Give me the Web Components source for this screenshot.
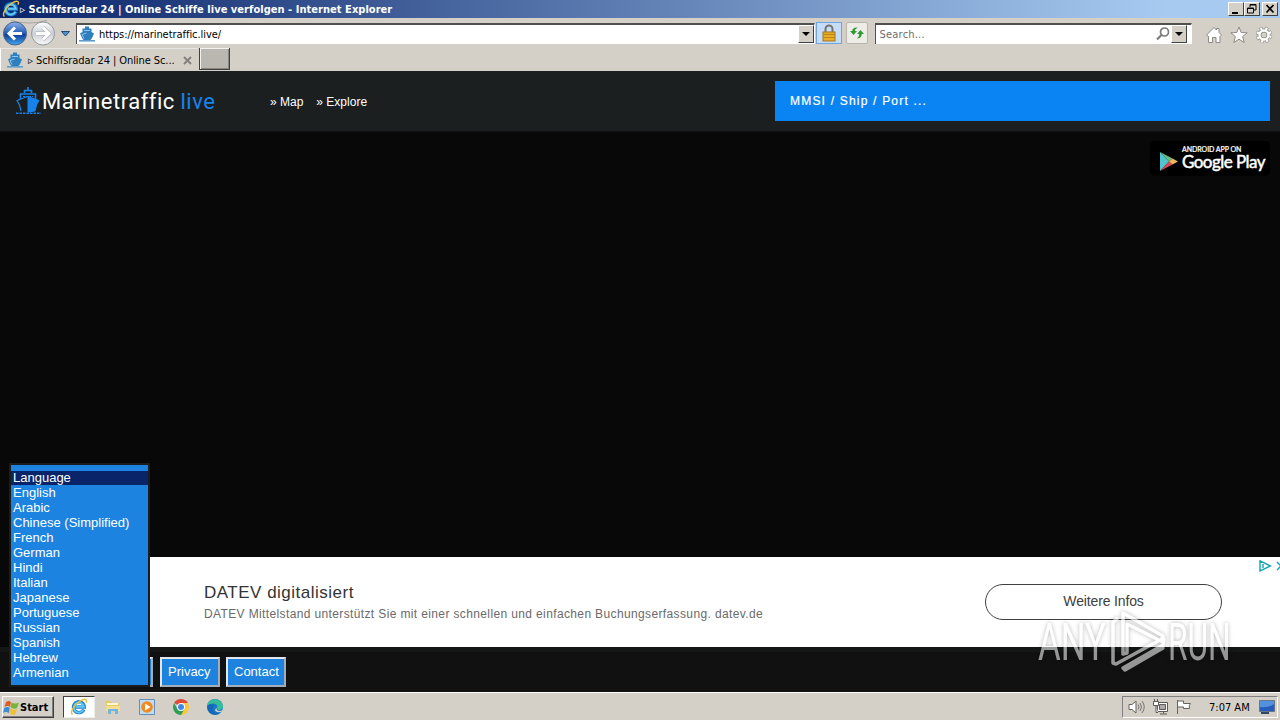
<!DOCTYPE html>
<html lang="de">
<head>
<meta charset="utf-8">
<title>Schiffsradar 24 | Online Schiffe live verfolgen</title>
<style>
    body {
        margin: 0;
        width: 1280px;
        height: 720px;
        overflow: hidden;
        background: #080808;
        --face: #d4d0c8;
        --ui: "DejaVu Sans Condensed", "DejaVu Sans", sans-serif;
        --web: "Liberation Sans", Arial, sans-serif;
        font-family: var(--web);
    }
</style>
</head>
<body>
<desktop-screen>
    <title-bar>▹ Schiffsradar 24 | Online Schiffe live verfolgen - Internet Explorer</title-bar>
    <nav-bar>https://marinetraffic.live/</nav-bar>
    <tab-strip>▹ Schiffsradar 24 | Online Sc...</tab-strip>
    <site-header></site-header>
    <map-view></map-view>
    <ad-banner>
        <span slot="title">DATEV digitalisiert</span>
        <span slot="text">DATEV Mittelstand unterstützt Sie mit einer schnellen und einfachen Buchungserfassung. datev.de</span>
        <span slot="action">Weitere Infos</span>
    </ad-banner>
    <site-footer></site-footer>
    <task-bar></task-bar>
    <language-list slot="over"></language-list>
    <run-watermark slot="over"></run-watermark>
</desktop-screen>

<script>
const base = `
    * {
        margin: 0;
        padding: 0;
        box-sizing: border-box;
    }
    :host {
        display: block;
        box-sizing: border-box;
        white-space: nowrap;
    }
    svg {
        display: block;
        flex: none;
    }
`;

function define(name, css, html) {
    customElements.define(name, class extends HTMLElement {
        constructor() {
            super();
            this.attachShadow({mode: "open"});
        }
        connectedCallback() {
            this.shadowRoot.innerHTML = `<style>${base}${css}</style>${html}`;
        }
    });
}

define("desktop-screen", `
    :host {
        position: relative;
        display: flex;
        flex-direction: column;
        width: 1280px;
        height: 720px;
        overflow: hidden;
    }
`, `<slot></slot><slot name="over"></slot>`);

define("ie-logo", `
    :host { width: 18px; height: 18px; flex: none; }
`, `
    <svg width="100%" height="100%" viewBox="0 0 18 18">
        <path d="M13.8 11.5A5.4 5.4 0 1 1 14.3 9H5.5" fill="none" stroke="#1c83cf" stroke-width="3.4"/>
        <path d="M13.3 11.9A5 5 0 1 1 13.8 8.8H6" fill="none" stroke="#68c7f3" stroke-width="1.9"/>
        <path d="M2.6 16.4C-.6 15.6 3.6 7 9.6 3.3 14.4.3 17.8.6 16 4.8" fill="none" stroke="#e9bf3b" stroke-width="1.4"/>
    </svg>
`);

define("ship-icon", `
    :host { width: 16px; height: 16px; flex: none; }
`, `
    <svg width="100%" height="100%" viewBox="0 0 16 16">
        <path d="M6 2.500V.500h4v2h2.500v3.500l2.500 1.500-2 4.500-1.500 2H4.500l-1.500-2L1 7.500 3.500 6V2.500z" fill="#2d7fbd"/>
        <path d="M5 4.500h6M7.500 7L3 8.600l2 4" fill="none" stroke="#8cc4ed"/>
        <path d="M0 14.800h16" stroke="#5f9ccb" stroke-width="1.600"/>
    </svg>
`);

define("title-bar", `
    :host {
        display: flex;
        align-items: center;
        height: 18px;
        padding: 0 2px;
        background: linear-gradient(to right, #0a246a, #a6caf0 91%);
        color: #fff;
        font: bold 11px var(--ui);
    }
    .text { flex: 1; letter-spacing: .04px; }
    .buttons { display: flex; }
    .buttons svg {
        width: 16px;
        height: 14px;
        background: var(--face);
        border: 1px solid;
        border-color: #fff #404040 #404040 #fff;
    }
    .buttons svg:last-child { margin-left: 2px; }
`, `
    <ie-logo></ie-logo>
    <span class="text"><slot></slot></span>
    <div class="buttons">
        <svg viewBox="0 0 14 12"><path d="M3 9h6v2H3z"/></svg>
        <svg viewBox="0 0 14 12"><path d="M5 4V1.500h6V7H9M5 2h6M2.500 5h6v5h-6zM2.500 5.500h6" fill="none" stroke="#000"/></svg>
        <svg viewBox="0 0 14 12"><path d="M3.500 2l7 7.500M10.500 2l-7 7.500" fill="none" stroke="#000" stroke-width="1.700"/></svg>
    </div>
`);

define("nav-bar", `
    :host {
        display: flex;
        align-items: center;
        height: 30px;
        padding: 0 7px 0 2px;
        background: var(--face);
        font: 11px var(--ui);
    }
    .field {
        display: flex;
        align-items: center;
        height: 21px;
        background: #fff;
        border: solid #505050;
        border-width: 2px 0 0 1px;
        border-right: 1px solid #fff;
    }
    .address { width: 740px; margin-left: 4px; padding-left: 2px; color: #000; }
    .address span { margin-left: 4px; flex: 1; letter-spacing: -.05px; }
    .search { width: 318px; margin-left: 7px; padding: 0 4px; color: #6d6d6d; }
    .search span { flex: 1; letter-spacing: .2px; }
    .drop {
        width: 16px;
        height: 18px;
        background: var(--face);
        border: 1px solid;
        border-color: #fff #404040 #404040 #fff;
    }
    .lock, .sync {
        display: flex;
        align-items: center;
        justify-content: center;
        height: 22px;
    }
    .lock { width: 26px; margin-left: 1px; background: #c5ddf8; border: 1px solid #70a6df; }
    .sync { width: 22px; margin-left: 4px; background: #eeece7; border: 1px solid #b8b4ac; border-radius: 2px; }
    .tools { display: flex; gap: 7px; margin: 4px 0 0 13px; }
`, `
    <svg width="70" height="30" viewBox="0 0 70 30">
        <defs>
            <linearGradient id="b" x2="0" y2="1"><stop stop-color="#8bb4eb"/><stop offset=".5" stop-color="#235bb6"/><stop offset=".55" stop-color="#103d95"/><stop offset="1" stop-color="#45a8f2"/></linearGradient>
            <linearGradient id="f" x2="0" y2="1"><stop stop-color="#fff"/><stop offset=".5" stop-color="#cbd0d6"/><stop offset="1" stop-color="#fafafa"/></linearGradient>
        </defs>
        <path d="M9 2.500q18 5 36 0" fill="none" stroke="#aaa69f"/>
        <circle cx="13" cy="15.500" r="11.500" fill="url(#b)" stroke="#4d6485"/>
        <path d="M20 15.500H8M13 9.500l-6 6 6 6" fill="none" stroke="#fff" stroke-width="3"/>
        <circle cx="41" cy="15.500" r="11.500" fill="url(#f)" stroke="#92979d"/>
        <path d="M34 15.500h12M41 9.500l6 6-6 6" fill="none" stroke="#a9acb0" stroke-width="4"/>
        <path d="M34 15.500h12M41 9.500l6 6-6 6" fill="none" stroke="#fff" stroke-width="3"/>
        <path d="M59.500 13.500h8l-4 4.500z" fill="#4a93d2" stroke="#1f4b76"/>
    </svg>
    <div class="field address">
        <ship-icon></ship-icon>
        <span><slot></slot></span>
        <svg class="drop" viewBox="0 0 14 16"><path d="M3 6h8l-4 4z"/></svg>
    </div>
    <div class="lock">
        <svg width="16" height="18" viewBox="0 0 16 18">
            <path d="M4.500 8V5a3.500 3.500 0 0 1 7 0v3" fill="none" stroke="#77736b" stroke-width="2"/>
            <rect x="2" y="8" width="12" height="9" fill="#e9ae24" stroke="#a4741c"/>
            <path d="M2 10.500h12M2 13.500h12" stroke="#ba821a"/>
        </svg>
    </div>
    <div class="sync">
        <svg width="16" height="16" viewBox="0 0 16 16" fill="#2c9b35">
            <path d="M1 6l3.500 4L8 6H5.700q0-2 3-3.500Q3.500 2 3.200 6z"/>
            <path d="M15 9l-3.500-4L8 9h2.300q0 3-2.500 4.500Q12.500 13.500 12.800 9z"/>
        </svg>
    </div>
    <div class="field search">
        <span>Search...</span>
        <svg width="16" height="16" viewBox="0 0 16 16"><circle cx="9.500" cy="6" r="4" fill="none" stroke="#7a7a7a" stroke-width="1.700"/><path d="M6.500 9L2 13.500" stroke="#7a7a7a" stroke-width="2.200"/></svg>
        <svg class="drop" viewBox="0 0 14 16"><path d="M3 6h8l-4 4z"/></svg>
    </div>
    <div class="tools">
        <svg width="18" height="18" viewBox="0 0 18 18"><path d="M1.500 9L9 1.500l2.500 2.500V2.500h2.500V6.500L16.500 9l-1.500 1.500V16.500h-4v-5H7.500v5h-4v-6z" fill="#fff" stroke="#8d8a84"/></svg>
        <svg width="18" height="18" viewBox="0 0 18 18"><path d="M9 1l2.200 5.500 6 .3-4.600 3.800 1.600 5.900L9 13.200l-5.200 3.300 1.600-5.900L.8 6.800l6-.3z" fill="#fff" stroke="#8d8a84"/></svg>
        <svg width="18" height="18" viewBox="0 0 18 18">
            <g fill="none" stroke="#8d8a84" stroke-width="4"><circle cx="9" cy="9" r="4.500"/><circle cx="9" cy="9" r="6.500" stroke-width="3.400" stroke-dasharray="3.200 1.905"/></g>
            <g fill="none" stroke="#fff" stroke-width="2.400"><circle cx="9" cy="9" r="4.500"/><circle cx="9" cy="9" r="6.500" stroke-dasharray="2.200 2.905" stroke-dashoffset="-.5"/></g>
        </svg>
    </div>
`);

define("tab-strip", `
    :host {
        display: flex;
        height: 23px;
        background: var(--face);
        font: 11px var(--ui);
    }
    .tab {
        display: flex;
        align-items: center;
        width: 198px;
        padding: 0 6px 0 6px;
        border-left: 1px solid #fff;
        border-top: 1px solid #e8e6e2;
    }
    .tab span { flex: 1; margin-left: 5px; letter-spacing: -.08px; }
    .new {
        width: 31px;
        height: 22px;
        margin-left: 1px;
        background: #bab6b0;
        border: solid #404040;
        border-width: 0 1px 1px 1px;
        box-shadow: inset 1px 1px #f3f1ee, inset -1px -1px #8b8780;
    }
`, `
    <div class="tab">
        <ship-icon></ship-icon>
        <span><slot></slot></span>
        <svg width="9" height="9" viewBox="0 0 9 9"><path d="M1 1l7 7M8 1L1 8" stroke="#85817c" stroke-width="2"/></svg>
    </div>
    <div class="new"></div>
`);

define("site-header", `
    :host {
        display: flex;
        align-items: center;
        height: 60px;
        padding: 0 10px 0 15px;
        background: #1c1f20;
        color: #fff;
    }
    .logo { display: flex; align-items: center; width: 255px; font: 22px Roboto, sans-serif; }
    .logo svg { margin: -1px 1px 0 0; }
    .logo b { font-weight: 400; color: #1683ec; }
    .logo span { letter-spacing: .52px; word-spacing: -.5px; }
    nav { display: flex; gap: 13px; flex: 1; padding-top: 2px; font-size: 12px; }
    .find {
        width: 495px;
        height: 40px;
        padding-left: 15px;
        background: #0b84f3;
        font-size: 12px;
        line-height: 40px;
        letter-spacing: 1.2px;
        -webkit-text-stroke: .2px #fff;
    }
`, `
    <div class="logo">
        <svg width="26" height="28" viewBox="0 0 26 28" fill="none" stroke="#1683ec">
            <path d="M13 0v4M9.500 6V3.500h7V6" stroke-width="1.600"/>
            <path d="M5.500 12V7h15v5" stroke-width="1.600"/>
            <path d="M8 9.500h10" stroke-dasharray="2 1"/>
            <path d="M12.500 9.500L2 13.500l2.500 4.500 1.500 6" stroke-width="1.200"/>
            <path d="M13 9.500l11 4-2.500 4.500-1.500 6-7 1z" fill="#1683ec"/>
            <path d="M1 26.200h25" stroke-width="1.600" stroke-dasharray="2.500 1"/>
        </svg>
        <span>Marinetraffic <b>live</b></span>
    </div>
    <nav><a>» Map</a><a>» Explore</a></nav>
    <div class="find">MMSI / Ship / Port ...</div>
`);

define("map-view", `
    :host {
        display: flex;
        align-items: flex-start;
        justify-content: flex-end;
        height: 426px;
        padding: 9px 10px;
        background: #080808;
        border-top: 1px solid #101112;
    }
    .play {
        display: flex;
        align-items: center;
        width: 120px;
        height: 35px;
        padding-left: 10px;
        gap: 4px;
        background: #000;
        border-radius: 5px;
        color: #fff;
    }
    .play svg { margin-top: 5px; }
    .play div { margin-top: -3px; }
    small { display: block; font: 500 7px/8px Lato, sans-serif; letter-spacing: -.05px; -webkit-text-stroke: .2px #fff; }
    strong { display: block; font: 400 17px/17px Lato, sans-serif; letter-spacing: -.55px; -webkit-text-stroke: .5px #fff; }
`, `
    <div class="play">
        <svg width="18" height="19" viewBox="0 0 18 19">
            <path d="M0 0v19L9 9.500z" fill="#4fc3cf"/>
            <path d="M0 0l12.500 6.500L9 9.500z" fill="#67bd7d"/>
            <path d="M0 19l12.500-6.500L9 9.500z" fill="#d84b55"/>
            <path d="M12.500 6.500L18 9.500l-5.500 3L9 9.500z" fill="#efb75a"/>
        </svg>
        <div><small>ANDROID APP ON</small><strong>Google Play</strong></div>
    </div>
`);

define("ad-banner", `
    :host {
        display: flex;
        height: 90px;
        margin-left: 150px;
        padding-left: 54px;
        background: #fff;
    }
    .copy { width: 781px; padding-top: 26px; color: #333; }
    .title { font-size: 17px; line-height: 20px; letter-spacing: .5px; }
    .text { margin-top: 3px; font-size: 12px; line-height: 16px; color: #6a6a6a; letter-spacing: .37px; }
    .action {
        width: 237px;
        height: 36px;
        margin-top: 27px;
        border: 1px solid #404040;
        border-radius: 18px;
        color: #404040;
        font-size: 14px;
        line-height: 33px;
        text-align: center;
        letter-spacing: -.15px;
    }
    svg { margin: 3px 0 0 auto; }
`, `
    <div class="copy">
        <div class="title"><slot name="title"></slot></div>
        <div class="text"><slot name="text"></slot></div>
    </div>
    <div class="action"><slot name="action"></slot></div>
    <svg width="21" height="12" viewBox="0 0 21 12" fill="none" stroke="#12a5b5" stroke-width="1.400"><path d="M1 .8v10L11.500 6zM4 4v4M18 2l4 4-4 4"/></svg>
`);

define("site-footer", `
    :host {
        display: flex;
        height: 45px;
        padding: 5px 0 0 96px;
        gap: 7px;
        background: #111;
        border-top: 5px solid #151717;
        font-size: 13px;
        color: #fff;
    }
    a {
        height: 30px;
        padding: 0 6px;
        line-height: 26px;
        background: #1e83df;
        border: 2px solid;
        border-color: #e3e6ea #a3adb8 #a3adb8 #e3e6ea;
    }
    .hidden-part { width: 57px; }
    .privacy { width: 60px; }
    .contact { width: 60px; margin-left: -1px; }
`, `
    <a class="hidden-part"></a>
    <a class="privacy">Privacy</a>
    <a class="contact">Contact</a>
`);

define("task-bar", `
    :host {
        display: flex;
        align-items: center;
        height: 28px;
        padding: 1px 2px 0;
        background: var(--face);
        border-top: 1px solid #fff;
        font: 11px var(--ui);
        color: #000;
    }
    .start {
        display: flex;
        align-items: center;
        width: 52px;
        height: 22px;
        font-weight: bold;
        border: 1px solid;
        border-color: #fff #404040 #404040 #fff;
        box-shadow: inset -1px -1px #808080;
    }
    .current {
        display: flex;
        align-items: center;
        justify-content: center;
        width: 32px;
        height: 22px;
        margin-left: 9px;
        background: #fff;
        border: 1px solid;
        border-color: #404040 #eee #eee #404040;
    }
    .pins { display: flex; gap: 18px; margin-left: 10px; flex: 1; }
    .tray {
        display: flex;
        align-items: center;
        width: 156px;
        height: 22px;
        padding: 0 2px 0 5px;
        gap: 6px;
        border: 1px solid;
        border-color: #808080 #fff #fff #808080;
    }
    .tray span { margin-left: 11px; flex: 1; }
`, `
    <div class="start">
        <svg width="17" height="17" viewBox="0 0 17 17">
            <path d="M3 3q3-2 5 0L7 8Q5 6 1.500 8z" fill="#df5c2a"/>
            <path d="M8.500 3.500q3 2 7.500 0L14 9q-3 1.500-6.500-.500z" fill="#78b43b"/>
            <path d="M1.300 9q3-2 5.500 0l-1 5Q3 12 0 14z" fill="#3d8ad9"/>
            <path d="M7.400 9.500q3 2 6.400.5l-1 5q-3 1.500-6.500-.5z" fill="#f0bf34"/>
        </svg>
        Start
    </div>
    <div class="current"><ie-logo></ie-logo></div>
    <div class="pins">
        <svg width="16" height="16" viewBox="0 0 16 16">
            <path d="M1 2h5l1 2h7v8H1z" fill="#e5ca69"/><path d="M2 4h11v2H2z" fill="#fff8cf"/>
            <path d="M1 7h14v5H1z" fill="#f4df91"/><path d="M3 15v-5h10v5h-3v-3H6v3z" fill="#75b5dc"/>
        </svg>
        <svg width="16" height="16" viewBox="0 0 16 16">
            <path d="M.5.500h15v15H.5z" fill="#c1dbf0" stroke="#6290ba"/>
            <circle cx="8" cy="8" r="5.800" fill="#f08a20"/><path d="M6 4.500v7L11.500 8z" fill="#fff"/>
        </svg>
        <svg width="16" height="16" viewBox="0 0 16 16">
            <path d="M8 8L1.100 4A8 8 0 0 1 14.900 4z" fill="#df4a38"/>
            <path d="M8 8V4h6.900A8 8 0 0 1 8 16z" fill="#f8ca3a"/>
            <path d="M8 8l3.500 2L8 16A8 8 0 0 1 1.100 4L4.500 10z" fill="#2f9d55"/>
            <circle cx="8" cy="8" r="4" fill="#fff"/><circle cx="8" cy="8" r="3" fill="#4285e8"/>
        </svg>
        <svg width="16" height="16" viewBox="0 0 16 16">
            <circle cx="8" cy="8" r="8" fill="#167ac6"/>
            <path d="M0 7C1-2 15-2 16 7c0 5-6 5-6 2 2-5-6-6-10-2" fill="#39bd99"/>
            <path d="M0 7q3-3 7-1-3 6 2 8 3 1 5-1-5 5-11 1Q0 11 0 7" fill="#1668b8"/>
            <path d="M9.500 9q0 3 3 3 2 0 3.500-1l-1 1.500q-3 1.500-6 0-2-1.500.5-3.500z" fill="#d4d0c8"/>
        </svg>
    </div>
    <div class="tray">
        <svg width="18" height="16" viewBox="0 0 18 16"><path d="M1 5.500h3L8 2v12l-4-3.500H1z" fill="#fff" stroke="#66635e"/><path d="M10 5.500q2 2.500 0 5M12 4q3 4 0 8M14 2q4.500 6 0 12" fill="none" stroke="#77736e"/></svg>
        <svg width="17" height="16" viewBox="0 0 17 16" fill="#fff" stroke="#5d5a56"><path d="M5.500 3.500h10v9h-10zM8 15h7M11.500 12.500v2"/><path d="M7.500 5.500h6v5h-6z" fill="#aaa"/><path d="M1.500 2.500h5v4h-5zM2.500 0v2M5.500 0v2M4 6.500v7h2"/></svg>
        <svg width="17" height="16" viewBox="0 0 17 16" fill="#fff" stroke="#66635e"><path d="M2.500 15V1M2.500 2h6v2.500h7q-2 2-1 5h-6V8h-6z"/></svg>
        <span>7:07 AM</span>
        <svg width="16" height="14" viewBox="0 0 16 14"><path d="M.5.500h15v11H.5z" fill="#245dbb" stroke="#6c7785"/><path d="M1 1h14v3Q9 8 1 7z" fill="#5491df"/><path d="M2 13h8" stroke="#304766" stroke-width="2"/></svg>
    </div>
`);

/* The open drop-down sits above the map and the footer */
class LanguageList extends HTMLElement {
    constructor() {
        super();
        this.attachShadow({mode: "open"});
    }

    connectedCallback() {
        const names = ["Language", "English", "Arabic", "Chinese (Simplified)", "French", "German", "Hindi",
            "Italian", "Japanese", "Portuguese", "Russian", "Spanish", "Hebrew", "Armenian"];
        this.shadowRoot.innerHTML = `
        <style>
            ${base}
            :host {
                position: absolute;
                left: 9px;
                top: 463px;
                width: 141px;
                height: 224px;
                padding-top: 6px;
                background: #1c83e0;
                border: 2px solid #1a1c1e;
                color: #fff;
                font-size: 13px;
            }
            div { height: 15px; padding-left: 2px; line-height: 14px; }
            div:first-of-type { background: linear-gradient(#0a246a 14px, transparent 14px); }
        </style>
        ${names.map(name => `<div>${name}</div>`).join("")}`;
    }
}
customElements.define("language-list", LanguageList);

define("run-watermark", `
    :host {
        position: absolute;
        left: 1038px;
        top: 608px;
        width: 204px;
        height: 72px;
        opacity: .56;
        filter: drop-shadow(0 0 2px rgba(0, 0, 0, .5));
    }
    text { font: 52px Roboto, sans-serif; }
`, `
    <svg width="204" height="72" viewBox="0 0 204 72" fill="#fff">
        <text transform="translate(0 52) scale(.67 1)">ANY</text>
        <text transform="translate(130 52) scale(.61 1)">RUN</text>
        <g fill="none" stroke="#fff" stroke-width="3.500" stroke-linejoin="round" stroke-linecap="round">
            <path d="M85 46V5l40 23-2 5-34-17v29z"/>
            <path d="M79 11l-4 3v41l3 1 42-23"/>
            <path d="M126 31l-1 6-40 23 2 2 38-22"/>
        </g>
    </svg>
`);
</script>
</body>
</html>
